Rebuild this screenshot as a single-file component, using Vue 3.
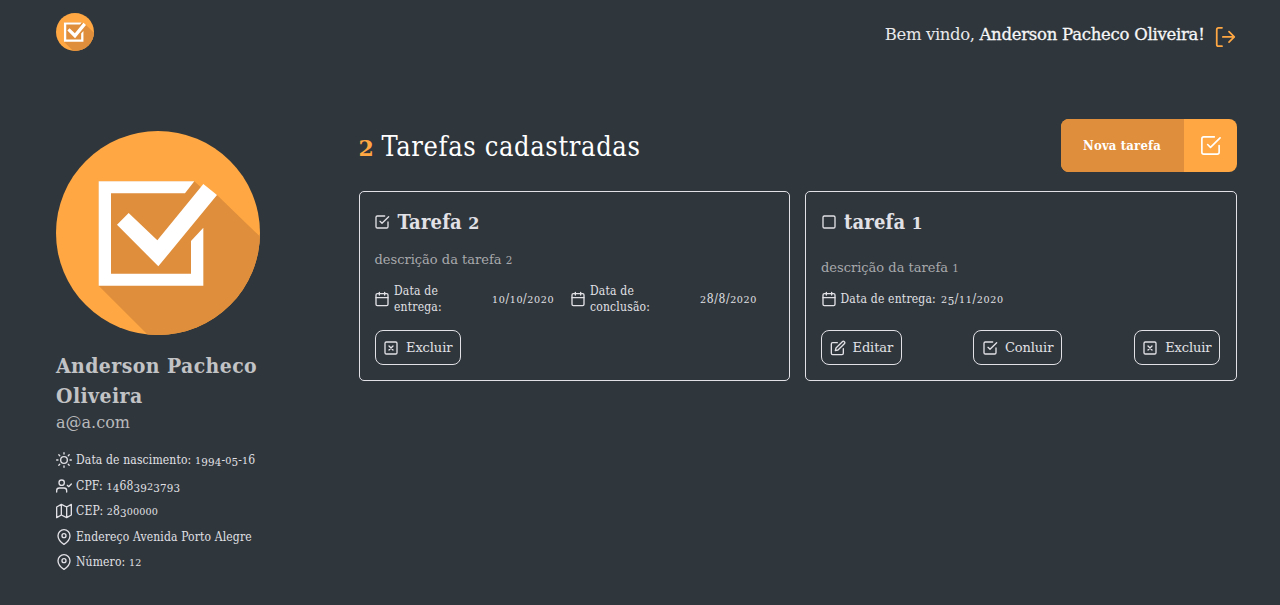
<script setup>
import { h } from 'vue'

const icons = {
  sun: '<circle cx="12" cy="12" r="5"/><path d="M12 1v2M12 21v2M4.22 4.22l1.42 1.42M18.36 18.36l1.42 1.42M1 12h2M21 12h2M4.22 19.78l1.42-1.42M18.36 5.64l1.42-1.42"/>',
  user: '<path d="M16 21v-2a4 4 0 0 0-4-4H5a4 4 0 0 0-4 4v2"/><circle cx="8.5" cy="7" r="4"/><path d="M17 11l2 2 4-4"/>',
  map: '<path d="M1 6v16l7-4 8 4 7-4V2l-7 4-8-4-7 4zM8 2v16M16 6v16"/>',
  pin: '<path d="M21 10c0 7-9 13-9 13s-9-6-9-13a9 9 0 0 1 18 0z"/><circle cx="12" cy="10" r="3"/>',
  check: '<path d="M9 11l3 3L22 4"/><path d="M21 12v7a2 2 0 0 1-2 2H5a2 2 0 0 1-2-2V5a2 2 0 0 1 2-2h11"/>',
  square: '<rect x="3" y="3" width="18" height="18" rx="2"/>',
  calendar: '<rect x="3" y="4" width="18" height="18" rx="2"/><path d="M16 2v4M8 2v4M3 10h18"/>',
  edit: '<path d="M11 4H4a2 2 0 0 0-2 2v14a2 2 0 0 0 2 2h14a2 2 0 0 0 2-2v-7"/><path d="M18.5 2.5a2.121 2.121 0 0 1 3 3L12 15l-4 1 1-4 9.500-9.500z"/>',
  close: '<rect x="3" y="3" width="18" height="18" rx="2"/><path d="M9 9l6 6M15 9l-6 6"/>',
  exit: '<path d="M8 2H4a2 2 0 0 0-2 2v17a2 2 0 0 0 2 2h4M9 12.500h13M16 6.500l6 6-6 6"/>'
}

const Icon = (props) =>
  h('svg', { class: 'icon', viewBox: '0 0 24 24', innerHTML: icons[props.name] })
Icon.props = ['name']

// Old-style figures: 0-2 sit at x-height, 3-5, 7 and 9 descend.
const Figures = (props) =>
  h('span', { class: 'fit' }, props.text.split(/([012]+|[34579]+)/).filter(Boolean).map((run) =>
    /^[012]/.test(run) ? h('span', { class: 'fig-small' }, run)
      : /^[34579]/.test(run) ? h('span', { class: 'fig-low' }, run) : run))
Figures.props = ['text']

const details = [
  { icon: 'sun', text: 'Data de nascimento: 1994-05-16' },
  { icon: 'user', text: 'CPF: 14683923793' },
  { icon: 'map', text: 'CEP: 28300000' },
  { icon: 'pin', text: 'Endereço Avenida Porto Alegre' },
  { icon: 'pin', text: 'Número: 12' }
]

const tasks = [
  {
    title: 'Tarefa 2', icon: 'check', text: 'descrição da tarefa 2', done: true,
    dates: [
      { label: 'Data de entrega:', value: '10/10/2020' },
      { label: 'Data de conclusão:', value: '28/8/2020' }
    ],
    actions: [{ icon: 'close', label: 'Excluir' }]
  },
  {
    title: 'tarefa 1', icon: 'square', text: 'descrição da tarefa 1', done: false,
    dates: [{ label: 'Data de entrega:', value: '25/11/2020' }],
    actions: [
      { icon: 'edit', label: 'Editar' },
      { icon: 'check', label: 'Conluir' },
      { icon: 'close', label: 'Excluir' }
    ]
  }
]
</script>

<template>
  <div class="page">
    <svg class="defs" width="0" height="0">
      <symbol id="logo" viewBox="0 0 612 612">
        <clipPath id="disc"><circle cx="306" cy="306" r="306" /></clipPath>
        <circle cx="306" cy="306" r="306" fill="#ffa843" />
        <g clip-path="url(#disc)">
          <path fill="#df8e3b" d="M128 464V151H415L438 172L483 192L700 402V700H364Z" />
        </g>
        <path fill="#fff" d="M128 151H415L387 187H165V428H405V330L442 290V464H128Z" />
        <path fill="#fff" d="M183 281L218 246L304 328L442 159L483 192L307 406Z" />
      </symbol>
    </svg>
    <header class="top">
      <svg class="brand"><use href="#logo" /></svg>
      <div class="welcome">
        <span class="hello"><span class="fit">Bem vindo, </span><strong class="fit">Anderson Pacheco Oliveira!</strong></span>
        <Icon name="exit" class="exit" />
      </div>
    </header>
    <div class="body">
      <aside class="profile">
        <svg class="avatar"><use href="#logo" /></svg>
        <h2 class="name"><span class="fit">Anderson Pacheco</span> <span class="fit">Oliveira</span></h2>
        <p class="email"><span class="fit">a@a.com</span></p>
        <ul class="details">
          <li v-for="(d, i) in details" :key="i"><Icon :name="d.icon" /><Figures :text="d.text" /></li>
        </ul>
      </aside>
      <main class="content">
        <div class="heading">
          <h1><b>2</b><span class="fit">Tarefas cadastradas</span></h1>
          <button class="new"><span class="new-label"><span class="fit">Nova tarefa</span></span><span class="new-icon"><Icon name="check" /></span></button>
        </div>
        <div class="cards">
          <article v-for="t in tasks" :key="t.title" class="card" :class="{ done: t.done }">
            <h3><Icon :name="t.icon" /><Figures :text="t.title" /></h3>
            <p class="desc"><Figures :text="t.text" /></p>
            <div class="dates">
              <div v-for="d in t.dates" :key="d.label" class="date">
                <Icon name="calendar" /><span class="label"><span class="fit">{{ d.label }}</span></span><span class="value"><Figures :text="d.value" /></span>
              </div>
            </div>
            <div class="actions">
              <button v-for="a in t.actions" :key="a.label"><Icon :name="a.icon" /><span class="fit">{{ a.label }}</span></button>
            </div>
          </article>
        </div>
      </main>
    </div>
  </div>
</template>

<style>
body { margin: 0; background: #2f363c; }
.icon { flex: none; width: 16px; height: 16px; fill: none; stroke: currentColor; stroke-width: 2; stroke-linecap: round; stroke-linejoin: round; }
.fit { white-space: nowrap; }
.fig-small { font-family: "DejaVu Serif", serif; font-stretch: normal; font-size: 0.8em; line-height: 1; }
.fig-low { position: relative; top: 0.19em; font-size: 0.96em; line-height: 1; }
</style>

<style scoped>
.page { box-sizing: border-box; height: 605px; padding: 13px 43.5px 0 56px; overflow: hidden; background: #2f363c; color: #e1e1e6; font-family: "DejaVu Serif Condensed", "DejaVu Serif", serif; font-stretch: condensed; }
.defs { position: absolute; }
h1, h2, h3, p, ul { margin: 0; padding: 0; }
button { font: inherit; color: inherit; }
.hello, .email, .desc, .actions button, h1 b { font-family: "DejaVu Serif", serif; font-stretch: normal; }
.top { display: flex; justify-content: space-between; height: 117px; }
.brand { width: 38px; height: 38px; }
.welcome { display: flex; height: 44px; gap: 10px; }
.hello { font-size: 16.500px; line-height: 44px; white-space: pre; color: #e8e8ea; letter-spacing: -0.4px; }
.hello strong { font-weight: 400; color: #f6f6f7; letter-spacing: -0.27px; -webkit-text-stroke: 0.3px; }
.exit { width: 21px; height: 21px; margin: 13px 1px 0 0; color: #ffa843; }
.body { display: grid; grid-template-columns: 204px 1fr; column-gap: 98.500px; }
.avatar { display: block; width: 204px; height: 204px; margin-top: 0.500px; }
.name { margin-top: 16.500px; font-size: 21px; line-height: 30px; color: #c2c3c5; letter-spacing: 0.42px; }
.email { font-size: 16px; line-height: 24px; color: #b8b9bb; }
.details { margin-top: 12.500px; list-style: none; font-size: 12px; letter-spacing: 0.15px; }
.details li { display: flex; align-items: center; gap: 4px; height: 25.500px; }
.details .icon { margin-left: -0.500px; margin-right: 0.500px; }
.heading { display: flex; justify-content: space-between; margin-top: -11px; height: 72px; }
h1 { display: flex; font-size: 27px; font-weight: 400; line-height: 56px; color: #fff; letter-spacing: 0.63px; }
h1 b { width: 23px; font-size: 22px; line-height: 58px; color: #ffa843; }
.new { display: flex; width: 176px; height: 53px; padding: 0; overflow: hidden; border: 0; border-radius: 8px; background: #ffa843; color: #fff; }
.new-label { width: 123px; background: #df8e3b; font-size: 13px; font-weight: 700; line-height: 54px; text-align: center; letter-spacing: 0.15px; }
.new-icon { display: grid; flex: 1; place-items: center; }
.new-icon .icon { width: 23px; height: 23px; stroke-width: 1.7; }
.cards { display: grid; grid-template-columns: 1fr 1fr; gap: 15px; }
.card { box-sizing: border-box; height: 190px; padding: 15px; border: 1px solid #e1e1e6; border-radius: 5px; }
h3 { display: flex; align-items: center; gap: 7.500px; height: 30px; font-size: 20px; letter-spacing: 0.15px; }
.desc { margin-top: 19px; font-size: 13px; line-height: 24px; color: #a8a9ac; }
.dates { display: flex; height: 32px; margin-top: 3px; }
.done .desc { margin-top: 11px; }
.done .dates { margin-top: 11px; }
.card .icon { margin-left: -0.500px; }
.date { display: flex; align-items: center; font-size: 12px; line-height: 16px; letter-spacing: 0.2px; }
.label { margin-left: 4px; }
.value { margin-left: 5px; letter-spacing: 0.6px; }
.done .date { width: 196px; }
.done .label { width: 55px; }
.done .label .fit { white-space: normal; }
.done .value { margin-left: 43px; }
.done .date + .date .value { margin-left: 55px; }
.actions { display: flex; justify-content: space-between; margin-top: 15px; }
.actions button { box-sizing: border-box; display: flex; align-items: center; gap: 7px; height: 35px; padding: 0 8px; border: 1px solid #e1e1e6; border-radius: 8px; background: none; font-size: 13px; letter-spacing: -0.1px; }
</style>
